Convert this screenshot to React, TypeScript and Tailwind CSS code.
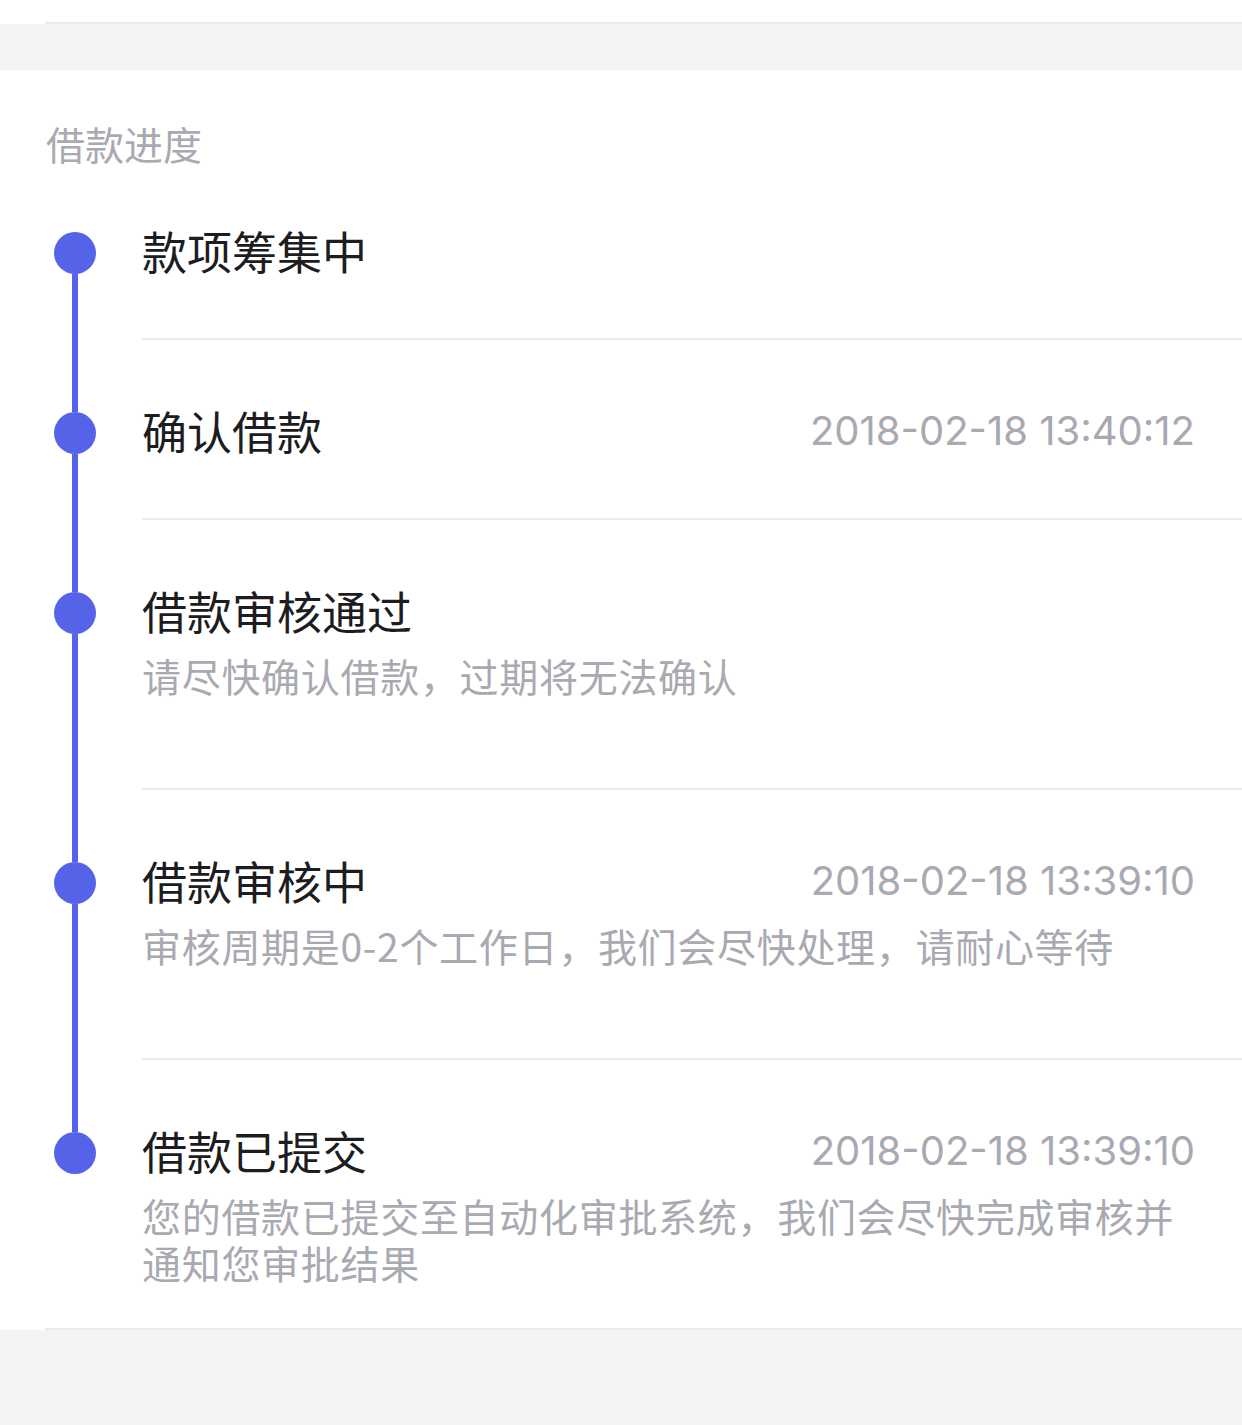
import React from 'react';

interface Step {
  title: string;
  time?: string;
  desc?: string;
}

const steps: Step[] = [
  { title: '款项筹集中' },
  { title: '确认借款', time: '2018-02-18 13:40:12' },
  { title: '借款审核通过', desc: '请尽快确认借款，过期将无法确认' },
  { title: '借款审核中', time: '2018-02-18 13:39:10', desc: '审核周期是0-2个工作日，我们会尽快处理，请耐心等待' },
  {
    title: '借款已提交',
    time: '2018-02-18 13:39:10',
    desc: '您的借款已提交至自动化审批系统，我们会尽快完成审核并通知您审批结果',
  },
];

function StepRow({ step, index, total }: { step: Step; index: number; total: number }) {
  const isFirst = index === 0;
  const isLast = index === total - 1;

  return (
    <div
      className={`flex ${
        isFirst ? 'h-[173px]' : isLast ? 'h-[268px]' : index === 1 ? 'h-[180px]' : 'h-[270px]'
      }`}
    >
      {/* 时间轴 */}
      <div className="flex w-[142px] shrink-0 flex-col pl-[54px]">
        <div
          className={`ml-[18px] w-[6px] ${isFirst ? 'h-[65px] bg-transparent' : 'h-[72px] bg-[#5563e8]'}`}
        />
        <div className="h-[42px] w-[42px] rounded-full bg-[#5563e8]" />
        <div className={`ml-[18px] w-[6px] flex-1 ${isLast ? 'bg-transparent' : 'bg-[#5563e8]'}`} />
      </div>

      <div
        className={`flex-1 pr-[47px] ${isFirst ? 'pt-[58px]' : 'pt-[65px]'} ${
          isLast ? '' : 'border-b-2 border-[#ececec]'
        }`}
      >
        <div className="flex items-center justify-between">
          <span className="text-[45px] leading-[52px] text-[#1c1c21]">{step.title}</span>
          {step.time && (
            <span
              className="text-[40px] leading-[50px] text-[#a9a9b1]"
              style={{ fontFamily: 'Inter, "Noto Sans", sans-serif' }}
            >
              {step.time}
            </span>
          )}
        </div>
        {step.desc && (
          <p className="mt-[15px] text-[39px] leading-[47px] tracking-[0.7px] text-[#a9a9b1]">{step.desc}</p>
        )}
      </div>
    </div>
  );
}

export default function App() {
  return (
    <div
      className="min-h-[1425px] w-full bg-[#f4f4f4]"
      style={{ fontFamily: '"Noto Sans CJK SC", "Noto Sans", sans-serif' }}
    >
      <div className="h-[22px] bg-white" />
      <div className="h-[2px] bg-white">
        <div className="ml-[45px] h-full bg-[#ebebeb]" />
      </div>
      <div className="h-[46px]" />

      <section className="bg-white">
        <h2 className="pl-[46px] pt-[49px] text-[39px] font-normal leading-[48px] text-[#a9a9b1]">借款进度</h2>
        {steps.map((step, i) => (
          <StepRow key={step.title} step={step} index={i} total={steps.length} />
        ))}
        <div className="ml-[45px] h-[2px] bg-[#ebebeb]" />
      </section>
    </div>
  );
}
